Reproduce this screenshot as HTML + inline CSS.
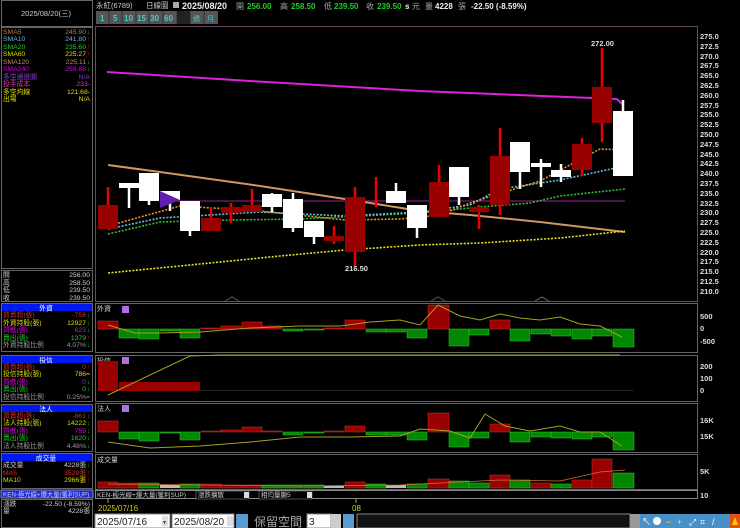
<!DOCTYPE html>
<html><head><meta charset="utf-8"><style>
html,body{margin:0;padding:0;background:#000;width:740px;height:528px;overflow:hidden}
svg{display:block;font-family:"Liberation Sans","Noto Sans CJK TC",sans-serif}
</style></head><body>
<svg width="740" height="528" viewBox="0 0 740 528" xmlns="http://www.w3.org/2000/svg">
<rect width="740" height="528" fill="#000"/>
<!-- LEFT PANEL -->
<g font-size="6.8">
<rect x="1.5" y="0.5" width="91" height="26" fill="none" stroke="#666"/>
<text x="46" y="16" fill="#ccc" text-anchor="middle" font-size="7.5">2025/08/20(三)</text>
<rect x="1.5" y="27.5" width="91" height="241" fill="none" stroke="#666"/>
<text x="3" y="34" fill="#c87a3a">SMA5</text><text x="86" y="34" fill="#c87a3a" text-anchor="end">245.90</text><text x="87" y="34" fill="#0c0">↓</text>
<text x="3" y="41" fill="#6ab0e0">SMA10</text><text x="86" y="41" fill="#6ab0e0" text-anchor="end">241.80</text><text x="87" y="41" fill="#e00">↑</text>
<text x="3" y="49" fill="#2c2">SMA20</text><text x="86" y="49" fill="#2c2" text-anchor="end">235.60</text><text x="87" y="49" fill="#e00">↑</text>
<text x="3" y="56" fill="#dd0">SMA60</text><text x="86" y="56" fill="#dd0" text-anchor="end">225.27</text><text x="87" y="56" fill="#e00">↑</text>
<text x="3" y="64" fill="#b89060">SMA120</text><text x="86" y="64" fill="#b89060" text-anchor="end">225.11</text><text x="87" y="64" fill="#0c0">↓</text>
<text x="3" y="71" fill="#d0d">SMA240</text><text x="86" y="71" fill="#d0d" text-anchor="end">258.88</text><text x="87" y="71" fill="#0c0">↓</text>
<text x="3" y="79" fill="#8040d0">多空通道圖</text><text x="90" y="79" fill="#8040d0" text-anchor="end">N/A</text>
<text x="3" y="86" fill="#d040a0">投手成本</text><text x="90" y="86" fill="#d040a0" text-anchor="end">233-</text>
<text x="3" y="94" fill="#dd0">多空均線</text><text x="90" y="94" fill="#dd0" text-anchor="end">121.68-</text>
<text x="3" y="101" fill="#dd0">出場</text><text x="90" y="101" fill="#dd0" text-anchor="end">N/A</text>
<rect x="1.5" y="270.5" width="91" height="31" fill="none" stroke="#666"/>
<text x="3" y="277" fill="#ccc">開</text><text x="90" y="277" fill="#ccc" text-anchor="end">256.00</text>
<text x="3" y="285" fill="#ccc">高</text><text x="90" y="285" fill="#ccc" text-anchor="end">258.50</text>
<text x="3" y="292" fill="#ccc">低</text><text x="90" y="292" fill="#ccc" text-anchor="end">239.50</text>
<text x="3" y="300" fill="#ccc">收</text><text x="90" y="300" fill="#ccc" text-anchor="end">239.50</text>
<!-- 外資 -->
<rect x="1.5" y="303.5" width="91" height="48" fill="none" stroke="#666"/>
<rect x="2" y="304" width="90" height="7" fill="#0018f0"/><text x="46" y="310.5" fill="#fff" text-anchor="middle">外資</text>
<text x="3" y="317" fill="#d03020">買賣超(張)</text><text x="86" y="317" fill="#d03020" text-anchor="end">-756</text><text x="87" y="317" fill="#0c0">↓</text>
<text x="3" y="325" fill="#dd0">外資持股(張)</text><text x="86" y="325" fill="#dd0" text-anchor="end">12927</text><text x="87" y="325" fill="#0c0">↓</text>
<text x="3" y="332" fill="#d0d">買進(張)</text><text x="86" y="332" fill="#d0d" text-anchor="end">623</text><text x="87" y="332" fill="#0c0">↓</text>
<text x="3" y="340" fill="#2c2">賣出(張)</text><text x="86" y="340" fill="#2c2" text-anchor="end">1379</text><text x="87" y="340" fill="#e00">↑</text>
<text x="3" y="347" fill="#999">外資持股比例</text><text x="86" y="347" fill="#999" text-anchor="end">4.07%</text><text x="87" y="347" fill="#0c0">↓</text>
<!-- 投信 -->
<rect x="1.5" y="355.5" width="91" height="46" fill="none" stroke="#666"/>
<rect x="2" y="356" width="90" height="7" fill="#0018f0"/><text x="46" y="362.5" fill="#fff" text-anchor="middle">投信</text>
<text x="3" y="369" fill="#d03020">買賣超(張)</text><text x="86" y="369" fill="#d03020" text-anchor="end">0</text><text x="87" y="369" fill="#e00">↑</text>
<text x="3" y="376" fill="#dd0">投信持股(張)</text><text x="90" y="376" fill="#dd0" text-anchor="end">786=</text>
<text x="3" y="384" fill="#d0d">買進(張)</text><text x="86" y="384" fill="#d0d" text-anchor="end">0</text><text x="87" y="384" fill="#0c0">↓</text>
<text x="3" y="391" fill="#2c2">賣出(張)</text><text x="86" y="391" fill="#2c2" text-anchor="end">0</text><text x="87" y="391" fill="#0c0">↓</text>
<text x="3" y="399" fill="#999">投信持股比例</text><text x="90" y="399" fill="#999" text-anchor="end">0.25%=</text>
<!-- 法人 -->
<rect x="1.5" y="404.5" width="91" height="47" fill="none" stroke="#666"/>
<rect x="2" y="405" width="90" height="7" fill="#0018f0"/><text x="46" y="411.5" fill="#fff" text-anchor="middle">法人</text>
<text x="3" y="418" fill="#d03020">買賣超(張)</text><text x="86" y="418" fill="#d03020" text-anchor="end">-861</text><text x="87" y="418" fill="#0c0">↓</text>
<text x="3" y="425" fill="#dd0">法人持股(張)</text><text x="86" y="425" fill="#dd0" text-anchor="end">14222</text><text x="87" y="425" fill="#0c0">↓</text>
<text x="3" y="433" fill="#d0d">買進(張)</text><text x="86" y="433" fill="#d0d" text-anchor="end">759</text><text x="87" y="433" fill="#0c0">↓</text>
<text x="3" y="440" fill="#2c2">賣出(張)</text><text x="86" y="440" fill="#2c2" text-anchor="end">1620</text><text x="87" y="440" fill="#0c0">↓</text>
<text x="3" y="448" fill="#999">法人持股比例</text><text x="86" y="448" fill="#999" text-anchor="end">4.48%</text><text x="87" y="448" fill="#0c0">↓</text>
<!-- 成交量 -->
<rect x="1.5" y="453.5" width="91" height="35" fill="none" stroke="#666"/>
<rect x="2" y="454" width="90" height="7" fill="#0018f0"/><text x="46" y="460.5" fill="#fff" text-anchor="middle">成交量</text>
<text x="3" y="467" fill="#ccc">成交量</text><text x="86" y="467" fill="#ccc" text-anchor="end">4228張</text><text x="87" y="467" fill="#0c0">↓</text>
<text x="3" y="475" fill="#d03020">MA5</text><text x="86" y="475" fill="#d03020" text-anchor="end">3529張</text><text x="87" y="475" fill="#e00">↑</text>
<text x="3" y="482" fill="#dd0">MA10</text><text x="86" y="482" fill="#dd0" text-anchor="end">2966張</text><text x="87" y="482" fill="#e00">↑</text>
<rect x="1" y="490" width="92" height="8" fill="#1a2ad0" stroke="#889"/>
<text x="3" y="496.5" fill="#ccf" font-size="6.3">KEN-極光線+爆大量(獲利SUP)</text>
<rect x="1.5" y="499.5" width="91" height="28" fill="none" stroke="#666"/>
<text x="3" y="506" fill="#ccc">漲跌</text><text x="90" y="506" fill="#ccc" text-anchor="end">-22.50 (-8.59%)</text>
<text x="3" y="513" fill="#ccc">量</text><text x="90" y="513" fill="#ccc" text-anchor="end">4228張</text>
</g>
<!-- TOP BAR -->
<text x="96" y="8" fill="#ccc" font-size="7.5">永紅(6789)</text>
<text x="146" y="8" fill="#ccc" font-size="7.5">日線圖</text>
<rect x="173" y="2" width="6" height="6" fill="#aaa"/>
<text x="182" y="9" fill="#eee" font-size="9" font-weight="bold">2025/08/20</text>
<g font-size="8" font-weight="bold">
<text x="236" y="9" fill="#aaa" font-weight="normal">開</text><text x="247" y="9" fill="#2c2">256.00</text>
<text x="280" y="9" fill="#aaa" font-weight="normal">高</text><text x="291" y="9" fill="#2c2">258.50</text>
<text x="324" y="9" fill="#aaa" font-weight="normal">低</text><text x="334" y="9" fill="#2c2">239.50</text>
<text x="366" y="9" fill="#aaa" font-weight="normal">收</text><text x="377" y="9" fill="#2c2">239.50</text>
<text x="405" y="9" fill="#eee">s</text><text x="412" y="9" fill="#aaa" font-weight="normal">元</text>
<text x="425" y="9" fill="#aaa" font-weight="normal">量</text><text x="435" y="9" fill="#eee">4228</text>
<text x="458" y="9" fill="#aaa" font-weight="normal">張</text><text x="471" y="9" fill="#eee">-22.50 (-8.59%)</text>
</g>
<g font-size="8" font-weight="bold" fill="#4cc">
<rect x="96" y="11" width="122" height="13" fill="#555"/>
<g stroke="#333"><line x1="109" y1="11" x2="109" y2="24"/><line x1="122" y1="11" x2="122" y2="24"/><line x1="136" y1="11" x2="136" y2="24"/><line x1="149" y1="11" x2="149" y2="24"/><line x1="163" y1="11" x2="163" y2="24"/><line x1="177" y1="11" x2="177" y2="24"/><line x1="190" y1="11" x2="190" y2="24"/><line x1="204" y1="11" x2="204" y2="24"/></g>
<rect x="177" y="11" width="13" height="13" fill="#222"/>
<text x="100" y="21">1</text><text x="113" y="21">5</text><text x="124" y="21">10</text><text x="137" y="21">15</text><text x="150" y="21">30</text><text x="164" y="21">60</text>
<text x="193" y="21" font-weight="normal" font-size="7">週</text><text x="207" y="21" font-weight="normal" font-size="7">月</text>
</g>
<!-- MAIN CHART FRAME -->
<rect x="95.5" y="26.5" width="602" height="275" fill="none" stroke="#6a4a5a"/>
<g fill="#ddd" font-size="7.5" font-weight="bold">
<text x="700" y="39">275.0</text><text x="700" y="49">272.5</text><text x="700" y="59">270.0</text><text x="700" y="68">267.5</text><text x="700" y="78">265.0</text><text x="700" y="88">262.5</text><text x="700" y="98">260.0</text><text x="700" y="108">257.5</text><text x="700" y="117">255.0</text><text x="700" y="127">252.5</text><text x="700" y="137">250.0</text><text x="700" y="147">247.5</text><text x="700" y="157">245.0</text><text x="700" y="166">242.5</text><text x="700" y="176">240.0</text><text x="700" y="186">237.5</text><text x="700" y="196">235.0</text><text x="700" y="206">232.5</text><text x="700" y="215">230.0</text><text x="700" y="225">227.5</text><text x="700" y="235">225.0</text><text x="700" y="245">222.5</text><text x="700" y="255">220.0</text><text x="700" y="264">217.5</text><text x="700" y="274">215.0</text><text x="700" y="284">212.5</text><text x="700" y="294">210.0</text>
</g>
<!-- MA lines -->
<polyline points="107,72 250,81 420,91 617,99" fill="none" stroke="#e020e0" stroke-width="2"/>
<line x1="617" y1="99" x2="622" y2="104" stroke="#e020e0" stroke-width="2"/>
<line x1="160" y1="201" x2="625" y2="201" stroke="#a020a0" stroke-width="1"/>
<polyline points="108,165 160,172 260,186 345,199 420,211 470,215 540,222 625,232" fill="none" stroke="#d09860" stroke-width="2"/>
<g fill="none" stroke-width="1.6" stroke-dasharray="2 1.5">
<polyline points="108,273 200,264 280,256 345,250 420,245 480,243 560,238 625,231" stroke="#e8e020"/>
<polyline points="108,234 160,222 230,220 300,219 420,213 480,207 530,203 560,196 625,189" stroke="#30c030"/>
<polyline points="108,229 160,218 260,212 345,216 420,212 470,205 500,189 560,180 625,166" stroke="#60c0e0"/>
<polyline points="108,226 180,206 260,211 345,220 400,219 440,215 470,203 540,181 570,165 600,149 625,150" stroke="#f09030"/>
</g>
<!-- candles -->
<g>
<g stroke="#e00" stroke-width="2.5">
<line x1="108" y1="187" x2="108" y2="205"/>
<line x1="211" y1="207" x2="211" y2="218"/>
<line x1="231" y1="203" x2="231" y2="223"/>
<line x1="252" y1="189" x2="252" y2="205"/>
<line x1="334" y1="226" x2="334" y2="244"/>
<line x1="355" y1="187" x2="355" y2="267"/>
<line x1="376" y1="177" x2="376" y2="207"/>
<line x1="439" y1="165" x2="439" y2="182"/>
<line x1="479" y1="205" x2="479" y2="229"/>
<line x1="500" y1="128" x2="500" y2="215"/>
<line x1="582" y1="138" x2="582" y2="176"/>
<line x1="602" y1="48" x2="602" y2="142"/>
</g>
<g fill="#900">
<rect x="98" y="205" width="20" height="24"/>
<rect x="201" y="218" width="20" height="13"/>
<rect x="221" y="207" width="20" height="6"/>
<rect x="242" y="205" width="20" height="7"/>
<rect x="324" y="236" width="20" height="5"/>
<rect x="345" y="197" width="20" height="55"/>
<rect x="429" y="182" width="20" height="35"/>
<rect x="469" y="207" width="20" height="5"/>
<rect x="490" y="156" width="20" height="49"/>
<rect x="572" y="144" width="20" height="26"/>
<rect x="592" y="87" width="20" height="36"/>
</g>
<g stroke="#fff" stroke-width="2.5">
<line x1="129" y1="183" x2="129" y2="208"/>
<line x1="149" y1="173" x2="149" y2="205"/>
<line x1="170" y1="191" x2="170" y2="211"/>
<line x1="190" y1="201" x2="190" y2="236"/>
<line x1="272" y1="193" x2="272" y2="212"/>
<line x1="293" y1="193" x2="293" y2="232"/>
<line x1="314" y1="221" x2="314" y2="244"/>
<line x1="396" y1="183" x2="396" y2="203"/>
<line x1="417" y1="205" x2="417" y2="238"/>
<line x1="459" y1="167" x2="459" y2="205"/>
<line x1="520" y1="142" x2="520" y2="189"/>
<line x1="541" y1="159" x2="541" y2="187"/>
<line x1="561" y1="164" x2="561" y2="182"/>
<line x1="623" y1="100" x2="623" y2="176"/>
</g>
<g fill="#fff">
<rect x="119" y="183" width="20" height="5"/>
<rect x="139" y="173" width="20" height="28"/>
<rect x="160" y="191" width="20" height="9"/>
<rect x="180" y="201" width="20" height="30"/>
<rect x="262" y="194" width="20" height="13"/>
<rect x="283" y="199" width="20" height="29"/>
<rect x="304" y="221" width="20" height="16"/>
<rect x="386" y="191" width="20" height="12"/>
<rect x="407" y="205" width="20" height="23"/>
<rect x="449" y="167" width="20" height="30"/>
<rect x="510" y="142" width="20" height="30"/>
<rect x="531" y="163" width="20" height="4"/>
<rect x="551" y="170" width="20" height="7"/>
<rect x="613" y="111" width="20" height="65"/>
</g>
<polygon points="160,191 180,200 160,208" fill="#6020b0"/>
</g>
<text x="345" y="271" fill="#ddd" font-size="7.5" font-weight="bold">216.50</text>
<text x="591" y="46" fill="#ddd" font-size="7.5" font-weight="bold">272.00</text>
<polyline points="225,301 232,297 239,301" fill="none" stroke="#557"/>
<polyline points="431,301 438,297 445,301" fill="none" stroke="#557"/>
<polyline points="535,301 542,297 549,301" fill="none" stroke="#864"/>

<!-- 外資 panel -->
<rect x="95.5" y="303.5" width="602" height="49" fill="none" stroke="#666"/>
<text x="97" y="311" fill="#ccc" font-size="7">外資</text>
<rect x="122" y="306" width="7" height="7" fill="#b070e0"/>
<g font-size="7.5" fill="#ddd" font-weight="bold"><text x="700" y="319">500</text><text x="700" y="331">0</text><text x="700" y="344">-500</text></g>
<g fill="#900" stroke="#c33" stroke-width="0.5">
<rect x="98" y="321" width="20" height="8"/><rect x="201" y="328" width="20" height="1"/><rect x="221" y="326" width="20" height="3"/><rect x="242" y="322" width="20" height="7"/><rect x="262" y="326" width="20" height="3"/><rect x="324" y="328" width="20" height="1"/><rect x="345" y="320" width="20" height="9"/><rect x="428" y="305" width="21" height="24"/><rect x="490" y="320" width="20" height="9"/>
</g>
<g fill="#080" stroke="#3c3" stroke-width="0.5">
<rect x="119" y="329" width="20" height="9"/><rect x="139" y="329" width="20" height="10"/><rect x="160" y="329" width="20" height="2"/><rect x="180" y="329" width="20" height="9"/><rect x="283" y="329" width="20" height="2"/><rect x="304" y="329" width="20" height="1"/><rect x="366" y="329" width="20" height="3"/><rect x="386" y="329" width="20" height="3"/><rect x="407" y="329" width="20" height="9"/><rect x="449" y="329" width="20" height="17"/><rect x="469" y="329" width="20" height="6"/><rect x="510" y="329" width="20" height="12"/><rect x="531" y="329" width="20" height="5"/><rect x="551" y="329" width="20" height="7"/><rect x="572" y="329" width="20" height="10"/><rect x="592" y="329" width="20" height="7"/><rect x="613" y="329" width="21" height="18"/>
</g>
<polyline points="108,325 135,333 160,333 200,332 250,328 300,326 340,326 370,322 400,320 420,325 438,305 460,316 480,320 500,314 520,318 540,320 560,317 580,324 600,326 622,337" fill="none" stroke="#a8a020" stroke-width="1"/>

<!-- 投信 panel -->
<rect x="95.5" y="355.5" width="602" height="46" fill="none" stroke="#666"/>
<text x="97" y="363" fill="#ccc" font-size="7">投信</text>
<rect x="122" y="357" width="7" height="7" fill="#b070e0"/>
<g font-size="7.5" fill="#ddd" font-weight="bold"><text x="700" y="369">200</text><text x="700" y="381">100</text><text x="700" y="393">0</text></g>
<g fill="#900"><rect x="98" y="361" width="20" height="30"/><rect x="119" y="382" width="20" height="9"/><rect x="139" y="382" width="41" height="9"/><rect x="180" y="382" width="20" height="9"/></g>
<line x1="200" y1="390.5" x2="634" y2="390.5" stroke="#222"/>
<polyline points="108,395 190,356 220,355 620,355" fill="none" stroke="#a8a020"/>

<!-- 法人 panel -->
<rect x="95.5" y="403.5" width="602" height="49" fill="none" stroke="#666"/>
<text x="97" y="411" fill="#ccc" font-size="7">法人</text>
<rect x="122" y="405" width="7" height="7" fill="#b070e0"/>
<g font-size="7.5" fill="#ddd" font-weight="bold"><text x="700" y="423">16K</text><text x="700" y="439">15K</text></g>
<g fill="#900" stroke="#c33" stroke-width="0.5">
<rect x="98" y="421" width="20" height="11"/><rect x="201" y="431" width="20" height="1"/><rect x="221" y="430" width="20" height="2"/><rect x="242" y="427" width="20" height="5"/><rect x="262" y="431" width="20" height="1"/><rect x="324" y="431" width="20" height="1"/><rect x="345" y="426" width="20" height="6"/><rect x="428" y="413" width="21" height="19"/><rect x="490" y="424" width="20" height="8"/>
</g>
<g fill="#080" stroke="#3c3" stroke-width="0.5">
<rect x="119" y="432" width="20" height="7"/><rect x="139" y="432" width="20" height="9"/><rect x="160" y="432" width="20" height="1"/><rect x="180" y="432" width="20" height="8"/><rect x="283" y="432" width="20" height="3"/><rect x="304" y="432" width="20" height="1"/><rect x="366" y="432" width="20" height="3"/><rect x="386" y="432" width="20" height="3"/><rect x="407" y="432" width="20" height="8"/><rect x="449" y="432" width="20" height="15"/><rect x="469" y="432" width="20" height="6"/><rect x="510" y="432" width="20" height="10"/><rect x="531" y="432" width="20" height="5"/><rect x="551" y="432" width="20" height="6"/><rect x="572" y="432" width="20" height="7"/><rect x="592" y="432" width="20" height="5"/><rect x="613" y="432" width="21" height="18"/>
</g>
<polyline points="108,442 150,448 200,446 250,442 300,437 350,437 400,436 420,429 450,431 470,438 485,414 505,426 530,431 560,426 580,432 600,432 622,446" fill="none" stroke="#a8a020"/>

<!-- Volume panel -->
<rect x="95.5" y="454.5" width="602" height="35" fill="none" stroke="#666"/>
<text x="97" y="462" fill="#ccc" font-size="7">成交量</text>
<text x="700" y="474" fill="#ddd" font-size="7.5" font-weight="bold">5K</text>
<g stroke-width="0.5">
<rect x="98" y="482" width="20" height="6" fill="#900" stroke="#c33"/>
<rect x="119" y="483" width="20" height="5" fill="#900" stroke="#c33"/>
<rect x="139" y="483" width="20" height="5" fill="#080" stroke="#3c3"/>
<rect x="160" y="485" width="20" height="3" fill="#bbb"/>
<rect x="180" y="484" width="20" height="4" fill="#080" stroke="#3c3"/>
<rect x="201" y="484" width="20" height="4" fill="#900" stroke="#c33"/>
<rect x="221" y="485" width="20" height="3" fill="#900" stroke="#c33"/>
<rect x="242" y="485" width="20" height="3" fill="#900" stroke="#c33"/>
<rect x="262" y="485" width="20" height="3" fill="#080" stroke="#3c3"/>
<rect x="283" y="485" width="20" height="3" fill="#080" stroke="#3c3"/>
<rect x="304" y="485" width="20" height="3" fill="#080" stroke="#3c3"/>
<rect x="324" y="486" width="20" height="2" fill="#bbb"/>
<rect x="345" y="482" width="20" height="6" fill="#900" stroke="#c33"/>
<rect x="366" y="484" width="20" height="4" fill="#080" stroke="#3c3"/>
<rect x="386" y="485" width="20" height="3" fill="#bbb"/>
<rect x="407" y="484" width="20" height="4" fill="#080" stroke="#3c3"/>
<rect x="428" y="479" width="21" height="9" fill="#900" stroke="#c33"/>
<rect x="449" y="481" width="20" height="7" fill="#080" stroke="#3c3"/>
<rect x="469" y="483" width="20" height="5" fill="#080" stroke="#3c3"/>
<rect x="490" y="475" width="20" height="13" fill="#900" stroke="#c33"/>
<rect x="510" y="480" width="20" height="8" fill="#080" stroke="#3c3"/>
<rect x="531" y="483" width="20" height="5" fill="#900" stroke="#c33"/>
<rect x="551" y="484" width="20" height="4" fill="#080" stroke="#3c3"/>
<rect x="572" y="480" width="20" height="8" fill="#900" stroke="#c33"/>
<rect x="592" y="459" width="20" height="29" fill="#900" stroke="#c33"/>
<rect x="613" y="473" width="21" height="15" fill="#080" stroke="#3c3"/>
</g>
<polyline points="108,484 200,485 300,486 400,485 440,483 500,480 560,481 600,472 625,470" fill="none" stroke="#d07030" stroke-width="0.8"/>

<!-- KEN bar -->
<rect x="95.5" y="490.5" width="602" height="8" fill="#000" stroke="#888"/>
<text x="97" y="497" fill="#ccc" font-size="6.5">KEN-極光線+爆大量(獲利SUP)</text>
<rect x="196" y="491" width="53" height="8" fill="#000" stroke="#999" stroke-width="0.5"/><text x="198" y="497" fill="#ccc" font-size="6.5">漲跌擴散</text><rect x="244" y="492" width="5" height="6" fill="#ddd"/>
<rect x="259" y="491" width="53" height="8" fill="#000" stroke="#999" stroke-width="0.5"/><text x="261" y="497" fill="#ccc" font-size="6.5">相均量顯5</text><rect x="307" y="492" width="5" height="6" fill="#ddd"/>
<text x="700" y="498" fill="#ddd" font-size="7.5" font-weight="bold">10</text>
<line x1="108" y1="499" x2="108" y2="503" stroke="#aa0"/>
<line x1="356" y1="499" x2="356" y2="503" stroke="#aa0"/>
<text x="98" y="511" fill="#cc2" font-size="8">2025/07/16</text>
<text x="352" y="511" fill="#cc2" font-size="8">08</text>

<!-- bottom controls -->
<rect x="95" y="514" width="75" height="14" fill="#fff" stroke="#888"/>
<text x="97" y="525" fill="#222" font-size="10">2025/07/16</text><rect x="162" y="516" width="6" height="10" fill="#ddd"/><text x="163" y="524" font-size="6">▾</text>
<text x="163" y="525" fill="#ccc" font-size="9">~</text>
<rect x="172" y="514" width="62" height="14" fill="#fff" stroke="#888"/>
<text x="174" y="525" fill="#222" font-size="10">2025/08/20</text><rect x="227" y="516" width="6" height="10" fill="#ddd"/>
<rect x="236" y="514" width="12" height="14" fill="#5a9ad0"/>
<text x="254" y="526" fill="#aaa" font-size="12">保留空間</text>
<rect x="307" y="514" width="24" height="14" fill="#fff" stroke="#888"/><text x="309" y="525" fill="#222" font-size="10">3</text>
<rect x="331" y="514" width="10" height="14" fill="#ccc"/>
<rect x="343" y="514" width="11" height="14" fill="#5a9ad0"/>
<rect x="357" y="514" width="273" height="14" fill="#111" stroke="#888"/>
<rect x="630" y="514" width="10" height="14" fill="#999"/>
<rect x="640" y="514" width="90" height="14" fill="#4a90c8"/>
<g font-size="9" fill="#fff"><text x="642" y="525">↖</text><circle cx="657" cy="521" r="4" fill="#fff"/><text x="666" y="525" fill="#ee0">−</text><text x="677" y="525" fill="#ee0">+</text><text x="689" y="525">⤢</text><text x="700" y="525">⌗</text><text x="712" y="525">/</text></g>
<rect x="730" y="514" width="10" height="14" fill="#e05010"/><path d="M732 525 L735 517 L738 525 Z" fill="#ffcc00"/>
</svg>
</body></html>
